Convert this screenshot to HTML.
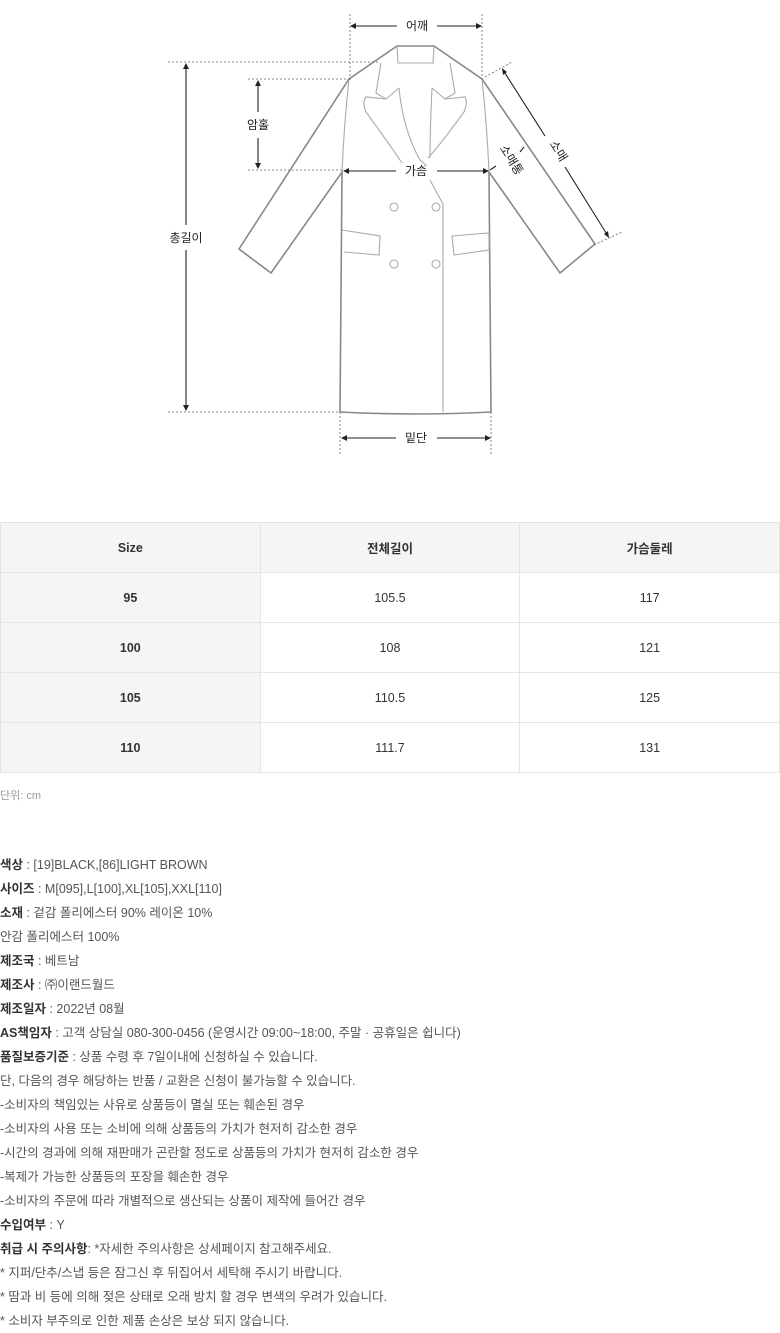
<!DOCTYPE html>
<html><head><meta charset="utf-8"><style>
body{margin:0;width:780px;height:1333px;background:#fff;font-family:"Liberation Sans","Noto Sans CJK KR",sans-serif;color:#333;position:relative;overflow:hidden}
svg text{font-family:"Liberation Sans","Noto Sans CJK KR",sans-serif;font-size:12px;fill:#222}
table{position:absolute;left:0;top:522px;width:780px;border-collapse:collapse;table-layout:fixed}
td{border:1px solid #e5e5e5;height:49px;text-align:center;font-size:12.5px;color:#333;padding:0}
tr:first-child td{background:#f5f5f5;font-weight:bold}
td:first-child{background:#f5f5f5;font-weight:bold}
.unit{position:absolute;left:0;top:787px;font-size:11px;color:#999}
.info{position:absolute;left:0;top:853px;font-size:12.5px;line-height:24px;color:#555}
.info b{color:#333}
</style></head><body>
<svg width="780" height="470" style="position:absolute;left:0;top:0">
<g fill="none" stroke="#888" stroke-width="1.6">
<path d="M397,46 L434,46 L482,79 L595,244 L560,273 L489,172 L491,412 Q415,416 340,412 L342,172 L271,273 L239,249 L349,79 Z"/>
</g>
<g fill="none" stroke="#aaa" stroke-width="1.1">
<path d="M349,79 Q344,125 342,172"/>
<path d="M482,79 Q487,125 489,172"/>
<path d="M397,46 L398,63 L433,63 L434,46"/>
<path d="M381,63 L376,93 L386,99 L399,88"/>
<path d="M450,63 L455,93 L445,99 L432,88"/>
<path d="M399,88 Q403,130 420,160 L426,165 L420,170"/>
<path d="M432,88 Q430,130 430,158"/>
<path d="M386,99 L366,97 Q362,102 366,112 Q390,145 402,163"/>
<path d="M445,99 L465,97 Q468,102 464,112 Q440,145 428,158"/>
<path d="M430,180 L443,204 L443,412"/>
<path d="M342,230 L380,236 L379,255 L344,252"/>
<path d="M452,236 L489,233 L489,250 L454,255 Z"/>
<circle cx="394" cy="207" r="4"/><circle cx="436" cy="207" r="4"/>
<circle cx="394" cy="264" r="4"/><circle cx="436" cy="264" r="4"/>
</g>
<g stroke="#666" stroke-width="0.8" stroke-dasharray="2,2" fill="none">
<line x1="350" y1="14" x2="350" y2="80"/><line x1="482" y1="14" x2="482" y2="80"/>
<line x1="168" y1="62" x2="380" y2="62"/>
<line x1="248" y1="79" x2="349" y2="79"/>
<line x1="248" y1="170" x2="342" y2="170"/>
<line x1="168" y1="412" x2="340" y2="412"/>
<line x1="340" y1="412" x2="340" y2="455"/><line x1="491" y1="412" x2="491" y2="455"/>
<line x1="485" y1="77" x2="512" y2="62"/>
<line x1="594" y1="245" x2="622" y2="232"/>
</g>
<g stroke="#222" stroke-width="1.1" fill="#222">
<line x1="352" y1="26" x2="397" y2="26"/><line x1="437" y1="26" x2="480" y2="26"/>
<line x1="186" y1="66" x2="186" y2="225"/><line x1="186" y1="250" x2="186" y2="408"/>
<line x1="258" y1="82" x2="258" y2="112"/><line x1="258" y1="138" x2="258" y2="167"/>
<line x1="345" y1="171" x2="396" y2="171"/><line x1="437" y1="171" x2="487" y2="171"/>
<line x1="343" y1="438" x2="396" y2="438"/><line x1="437" y1="438" x2="489" y2="438"/>
<line x1="503" y1="70" x2="545" y2="136"/><line x1="565" y1="167" x2="608" y2="236"/>
<line x1="490" y1="170" x2="496" y2="166"/><line x1="520" y1="152" x2="524" y2="147"/>
<path d="M350,26 l6,-3 v6z M482,26 l-6,-3 v6z M186,63 l-3,6 h6z M186,411 l-3,-6 h6z M258,80 l-3,6 h6z M258,169 l-3,-6 h6z M343,171 l6,-3 v6z M489,171 l-6,-3 v6z M341,438 l6,-3 v6z M491,438 l-6,-3 v6z" stroke="none"/>
<path d="M502,68 l1,7 l4,-3z M609,238 l-1,-7 l-4,3z" stroke="none"/>
</g>
<text x="417" y="30" text-anchor="middle">어깨</text>
<text x="186" y="242" text-anchor="middle">총길이</text>
<text x="258" y="129" text-anchor="middle">암홀</text>
<text x="416" y="175" text-anchor="middle">가슴</text>
<text x="416" y="442" text-anchor="middle">밑단</text>
<text x="555" y="153" text-anchor="middle" transform="rotate(58 555 153)">소매</text>
<text x="508" y="162" text-anchor="middle" font-size="11" transform="rotate(58 508 162)">소매통</text>
</svg>
<table>
<tr><td>Size</td><td>전체길이</td><td>가슴둘레</td></tr>
<tr><td>95</td><td>105.5</td><td>117</td></tr>
<tr><td>100</td><td>108</td><td>121</td></tr>
<tr><td>105</td><td>110.5</td><td>125</td></tr>
<tr><td>110</td><td>111.7</td><td>131</td></tr>
</table>
<div class="unit">단위: cm</div>
<div class="info">
<b>색상</b> : [19]BLACK,[86]LIGHT BROWN<br>
<b>사이즈</b> : M[095],L[100],XL[105],XXL[110]<br>
<b>소재</b> : 겉감 폴리에스터 90% 레이온 10%<br>
안감 폴리에스터 100%<br>
<b>제조국</b> : 베트남<br>
<b>제조사</b> : ㈜이랜드월드<br>
<b>제조일자</b> : 2022년 08월<br>
<b>AS책임자</b> : 고객 상담실 080-300-0456 (운영시간 09:00~18:00, 주말 · 공휴일은 쉽니다)<br>
<b>품질보증기준</b> : 상품 수령 후 7일이내에 신청하실 수 있습니다.<br>
단, 다음의 경우 해당하는 반품 / 교환은 신청이 불가능할 수 있습니다.<br>
-소비자의 책임있는 사유로 상품등이 멸실 또는 훼손된 경우<br>
-소비자의 사용 또는 소비에 의해 상품등의 가치가 현저히 감소한 경우<br>
-시간의 경과에 의해 재판매가 곤란할 정도로 상품등의 가치가 현저히 감소한 경우<br>
-복제가 가능한 상품등의 포장을 훼손한 경우<br>
-소비자의 주문에 따라 개별적으로 생산되는 상품이 제작에 들어간 경우<br>
<b>수입여부</b> : Y<br>
<b>취급 시 주의사항</b>: *자세한 주의사항은 상세페이지 참고해주세요.<br>
* 지퍼/단추/스냅 등은 잠그신 후 뒤집어서 세탁해 주시기 바랍니다.<br>
* 땀과 비 등에 의해 젖은 상태로 오래 방치 할 경우 변색의 우려가 있습니다.<br>
* 소비자 부주의로 인한 제품 손상은 보상 되지 않습니다.
</div>
</body></html>
